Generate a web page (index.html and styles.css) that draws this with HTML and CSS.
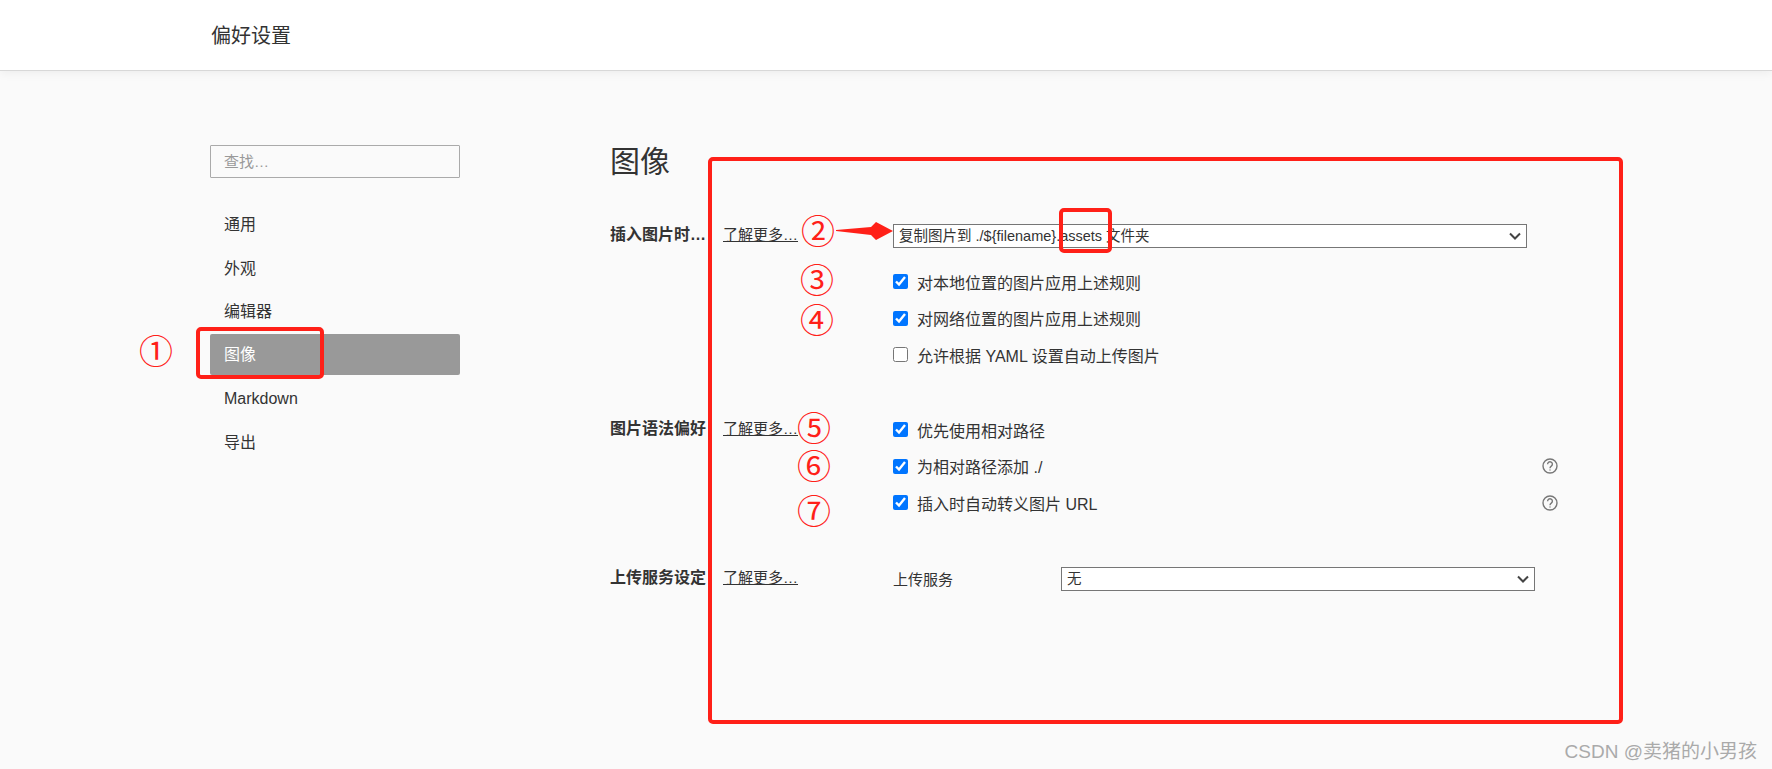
FILE: index.html
```html
<!DOCTYPE html>
<html lang="zh-CN">
<head>
    <meta charset="UTF-8">
    <title>偏好设置</title>
    <link rel="stylesheet" href="styles.css">
</head>
<body>

<div class="header">偏好设置</div>

<div class="main">
    <div class="sidebar">
        <input class="search" type="text" placeholder="查找…">
        <ul class="nav">
            <li>通用</li>
            <li>外观</li>
            <li>编辑器</li>
            <li class="active">图像</li>
            <li>Markdown</li>
            <li>导出</li>
        </ul>
    </div>

    <div class="content">
        <h1>图像</h1>

        <div class="section section-first">
            <div class="label">插入图片时…</div>
            <a class="more">了解更多…</a>
            <div class="options">
                <div class="select-wrap select-wide">
                    <select>
                        <option>复制图片到 ./${filename}.assets 文件夹</option>
                    </select>
                    <svg class="chevron" viewBox="0 0 12 8"><path d="M1 1.5l5 5 5-5"/></svg>
                </div>
                <label class="opt"><input type="checkbox" checked>对本地位置的图片应用上述规则</label>
                <label class="opt"><input type="checkbox" checked>对网络位置的图片应用上述规则</label>
                <label class="opt"><input type="checkbox">允许根据 YAML 设置自动上传图片</label>
            </div>
        </div>

        <div class="section">
            <div class="label">图片语法偏好</div>
            <a class="more">了解更多…</a>
            <div class="options">
                <label class="opt"><input type="checkbox" checked>优先使用相对路径</label>
                <label class="opt"><input type="checkbox" checked>为相对路径添加 ./
                    <svg class="help" viewBox="0 0 16 16"><circle cx="8" cy="8" r="7"/><path d="M5.6 6.2a2.4 2.4 0 1 1 3.7 2c-.9.6-1.3 1-1.3 2"/><path d="M8 11.4v1.2"/></svg>
                </label>
                <label class="opt"><input type="checkbox" checked>插入时自动转义图片 URL
                    <svg class="help" viewBox="0 0 16 16"><circle cx="8" cy="8" r="7"/><path d="M5.6 6.2a2.4 2.4 0 1 1 3.7 2c-.9.6-1.3 1-1.3 2"/><path d="M8 11.4v1.2"/></svg>
                </label>
            </div>
        </div>

        <div class="section">
            <div class="label">上传服务设定</div>
            <a class="more">了解更多…</a>
            <div class="options">
                <div class="service">
                    <span class="service-name">上传服务</span>
                    <div class="select-wrap select-service">
                        <select>
                            <option>无</option>
                        </select>
                        <svg class="chevron" viewBox="0 0 12 8"><path d="M1 1.5l5 5 5-5"/></svg>
                    </div>
                </div>
            </div>
        </div>
    </div>
</div>

<!-- red annotations drawn over the screenshot -->
<div class="box box-nav"></div>
<div class="box box-assets"></div>
<div class="box box-content"></div>
<svg class="arrow" viewBox="0 0 57 18"><polygon points="0,8 35,5 40,0 57,9 40,18 35,13 0,9"/></svg>
<span class="mark mark-1">①</span>
<span class="mark mark-2">②</span>
<span class="mark mark-3">③</span>
<span class="mark mark-4">④</span>
<span class="mark mark-5">⑤</span>
<span class="mark mark-6">⑥</span>
<span class="mark mark-7">⑦</span>

<div class="watermark">CSDN @卖猪的小男孩</div>

</body>
</html>
```
FILE: styles.css
```css
* {
    box-sizing: border-box;
}
body {
    font-family: "Liberation Sans", "Noto Sans CJK SC", sans-serif;
    font-size: 15px;
    color: #333;
    background-color: #fafafa;
    margin: 0;
    height: 769px;
    overflow: hidden;
    position: relative;
}
.header {
    height: 71px;
    line-height: 72px;
    padding-left: 211px;
    font-size: 20px;
    background-color: white;
    border-bottom: 1px solid #d8d8d8;
    box-shadow: 0 2px 10px rgba(0, 0, 0, 0.06);
}
.main {
    display: flex;
    padding-left: 210px;
}
.sidebar {
    width: 250px;
    padding-top: 74px;
    margin-right: 150px;
}
.search {
    display: block;
    width: 100%;
    height: 33px;
    padding: 0 13px;
    font-family: inherit;
    font-size: 15px;
    background-color: #fafafa;
    border: 1px solid #aaa;
    border-radius: 1px;
}
.search::placeholder {
    color: #999;
}
.nav {
    list-style: none;
    margin: 25px 0 0;
    padding: 0;
}
.nav li {
    height: 41px;
    line-height: 43px;
    padding-left: 14px;
    font-size: 16px;
    margin-bottom: 2.6px;
    border-radius: 2px;
}
.nav .active {
    background-color: #999;
    color: white;
    line-height: 41px;
}
.content {
    width: 948px;
    padding-top: 70px;
}
h1 {
    margin: 0 0 43px;
    height: 40px;
    line-height: 42px;
    font-size: 30px;
    font-weight: normal;
}
.section {
    display: flex;
    margin-bottom: 52px;
}
.section-first {
    margin-bottom: 51px;
}
.label {
    width: 97px;
    margin-right: 16px;
    height: 22px;
    line-height: 22px;
    font-size: 16px;
    font-weight: bold;
    white-space: nowrap;
    overflow: hidden;
}
.more {
    width: 170px;
    line-height: 22px;
    font-size: 15px;
    text-decoration: underline;
}
.options {
    width: 665px;
    display: flex;
    flex-direction: column;
    gap: 12.5px;
}
.opt {
    display: flex;
    align-items: center;
    height: 24px;
    font-size: 16px;
}
.opt input {
    width: 15px;
    height: 15px;
    margin: 0 9px 0 0;
}
.select-wrap {
    position: relative;
    height: 24px;
}
select {
    appearance: none;
    display: block;
    width: 100%;
    height: 24px;
    padding: 0 5px;
    font-family: inherit;
    font-size: 14.5px;
    color: #333;
    background-color: white;
    border: 1px solid #767676;
    border-radius: 0;
}
.chevron {
    position: absolute;
    right: 6px;
    top: 8px;
    width: 12px;
    height: 8px;
    fill: none;
    stroke: #444;
    stroke-width: 2;
}
.select-wide {
    width: 634px;
    margin-bottom: 9px;
}
.service {
    display: flex;
    align-items: center;
    height: 24px;
}
.service-name {
    width: 168px;
}
.select-service {
    width: 474px;
}
.help {
    width: 16px;
    height: 16px;
    margin-left: auto;
    fill: none;
    stroke: #777;
    stroke-width: 1.4;
}
.box {
    position: absolute;
    border: 4px solid #ff2018;
    border-radius: 5px;
}
.box-nav {
    left: 196px;
    top: 327px;
    width: 128px;
    height: 52px;
}
.box-assets {
    left: 1059px;
    top: 208px;
    width: 53px;
    height: 45px;
}
.box-content {
    left: 708px;
    top: 157px;
    width: 915px;
    height: 567px;
}
.arrow {
    position: absolute;
    left: 836px;
    top: 222px;
    width: 57px;
    height: 18px;
    fill: #ff2018;
}
.mark {
    position: absolute;
    width: 36px;
    height: 36px;
    line-height: 36px;
    text-align: center;
    font-size: 34px;
    color: #ff2018;
}
.mark-1 { left: 138px; top: 334px; }
.mark-2 { left: 800px; top: 214px; }
.mark-3 { left: 799px; top: 263px; }
.mark-4 { left: 799px; top: 303px; }
.mark-5 { left: 796px; top: 411px; }
.mark-6 { left: 796px; top: 449px; }
.mark-7 { left: 796px; top: 494px; }
.watermark {
    position: absolute;
    right: 15px;
    top: 736px;
    font-size: 19px;
    color: #aaa;
}
```
